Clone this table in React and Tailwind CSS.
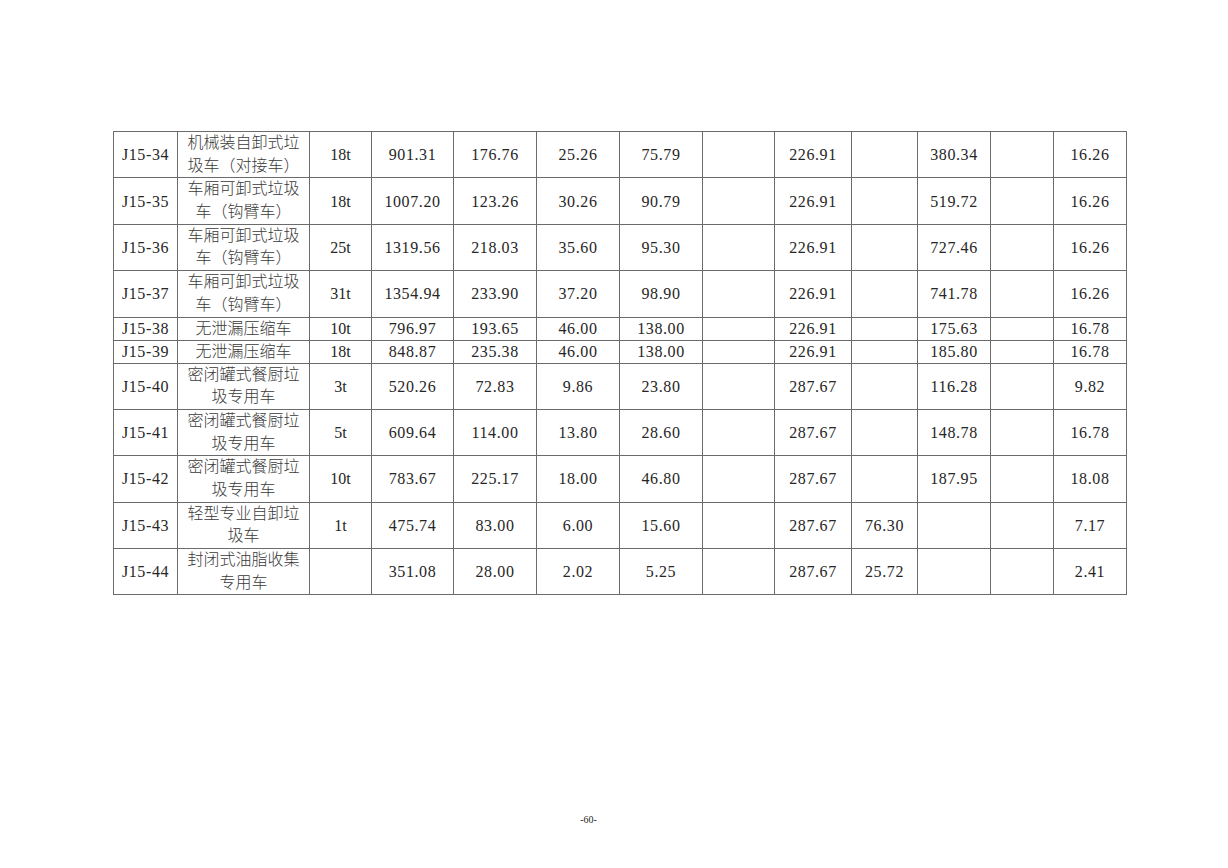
import React from "react";

const cols = [64, 132, 62, 82, 83, 83, 83, 72, 77, 66, 73, 63, 73];

const rows = [
  { code: "J15-34", name: ["机械装自卸式垃", "圾车（对接车）"], t: "18t", v: ["901.31", "176.76", "25.26", "75.79", "", "226.91", "", "380.34", "", "16.26"] },
  { code: "J15-35", name: ["车厢可卸式垃圾", "车（钩臂车）"], t: "18t", v: ["1007.20", "123.26", "30.26", "90.79", "", "226.91", "", "519.72", "", "16.26"] },
  { code: "J15-36", name: ["车厢可卸式垃圾", "车（钩臂车）"], t: "25t", v: ["1319.56", "218.03", "35.60", "95.30", "", "226.91", "", "727.46", "", "16.26"] },
  { code: "J15-37", name: ["车厢可卸式垃圾", "车（钩臂车）"], t: "31t", v: ["1354.94", "233.90", "37.20", "98.90", "", "226.91", "", "741.78", "", "16.26"] },
  { code: "J15-38", name: ["无泄漏压缩车"], t: "10t", v: ["796.97", "193.65", "46.00", "138.00", "", "226.91", "", "175.63", "", "16.78"] },
  { code: "J15-39", name: ["无泄漏压缩车"], t: "18t", v: ["848.87", "235.38", "46.00", "138.00", "", "226.91", "", "185.80", "", "16.78"] },
  { code: "J15-40", name: ["密闭罐式餐厨垃", "圾专用车"], t: "3t", v: ["520.26", "72.83", "9.86", "23.80", "", "287.67", "", "116.28", "", "9.82"] },
  { code: "J15-41", name: ["密闭罐式餐厨垃", "圾专用车"], t: "5t", v: ["609.64", "114.00", "13.80", "28.60", "", "287.67", "", "148.78", "", "16.78"] },
  { code: "J15-42", name: ["密闭罐式餐厨垃", "圾专用车"], t: "10t", v: ["783.67", "225.17", "18.00", "46.80", "", "287.67", "", "187.95", "", "18.08"] },
  { code: "J15-43", name: ["轻型专业自卸垃", "圾车"], t: "1t", v: ["475.74", "83.00", "6.00", "15.60", "", "287.67", "76.30", "", "", "7.17"] },
  { code: "J15-44", name: ["封闭式油脂收集", "专用车"], t: "", v: ["351.08", "28.00", "2.02", "5.25", "", "287.67", "25.72", "", "", "2.41"] },
];

const cell = "border border-[#6b6b6b] p-0 text-center align-middle";

export default function App() {
  return (
    <div className="w-[1228px] h-[868px] bg-white flex flex-col items-start pt-[131px] pl-[113px] text-[#262626] font-['Liberation_Serif','Noto_Sans_CJK_SC',serif]">
      <table className="table-fixed border-collapse w-[1013px] text-[16px] leading-[21px]">
        <colgroup>
          {cols.map((w, i) => (
            <col key={i} style={{ width: w }} />
          ))}
        </colgroup>
        <tbody>
          {rows.map((r) => (
            <tr key={r.code}>
              <td className={`${cell} tracking-[0.6px]`}>{r.code}</td>
              <td className={cell}>
                {r.name.map((l, i) => (
                  <div
                    key={i}
                    className={`${r.name.length > 1 ? "h-[22.7px] leading-[22.7px]" : "h-[22px] leading-[22px]"} overflow-visible font-light text-[#3a3a3a]`}
                  >
                    {l}
                  </div>
                ))}
              </td>
              <td className={cell}>{r.t}</td>
              {r.v.map((x, i) => (
                <td key={i} className={`${cell} tracking-[0.6px]`}>{x}</td>
              ))}
            </tr>
          ))}
        </tbody>
      </table>
      <div className="mt-[219px] w-[1013px] text-center text-[10px] leading-[12px] pr-[62px]">-60-</div>
    </div>
  );
}
